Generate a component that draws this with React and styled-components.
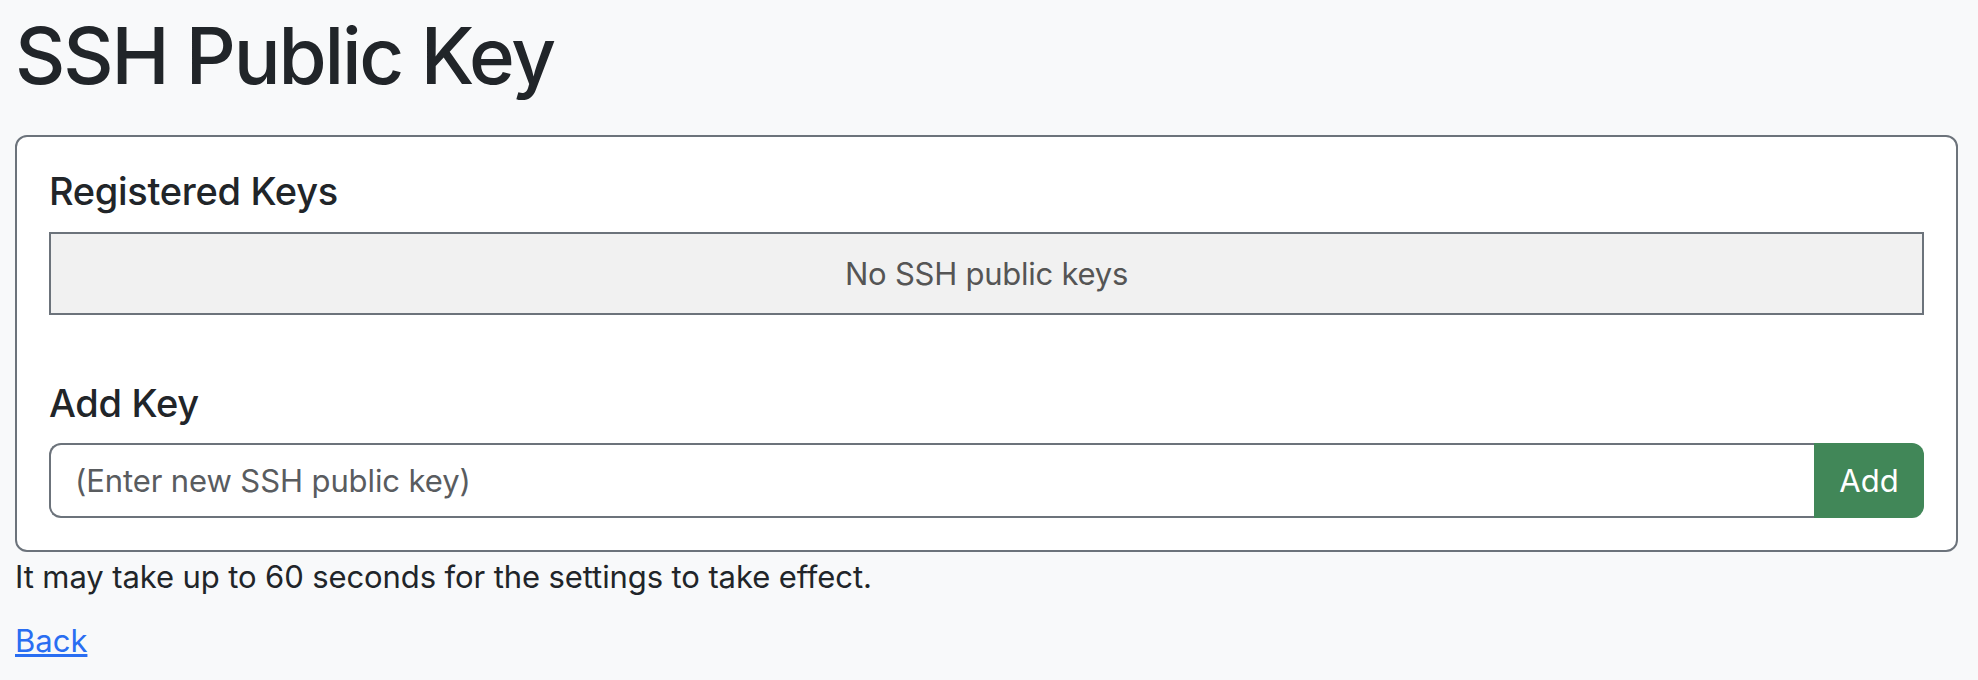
import styled, { createGlobalStyle } from 'styled-components';

const GlobalStyle = createGlobalStyle`
  html, body {
    margin: 0;
    padding: 0;
    background: #f8f9fa;
  }
  body {
    font-family: Inter, "Noto Sans", "Liberation Sans", sans-serif;
    color: #212529;
  }
  * {
    box-sizing: border-box;
  }
`;

const Page = styled.div`
  padding: 8px 20px 0 15px;
`;

const Title = styled.h1`
  margin: 0 0 31px;
  font-size: 78px;
  line-height: 96px;
  font-weight: 500;
  letter-spacing: -2.2px;
`;

const Card = styled.div`
  background: #fff;
  border: 2px solid #6c737b;
  border-radius: 12px;
  padding: 30px 32px 32px;
`;

const Section = styled.section`
  & + & {
    margin-top: 64px;
  }
`;

const SectionTitle = styled.h5`
  margin: 0 0 ${(p) => p.$gap || 16}px;
  font-size: 38px;
  line-height: 48px;
  font-weight: 500;
  letter-spacing: -0.3px;
`;

const EmptyBox = styled.div`
  background: #f1f1f1;
  border: 2px solid #6c737b;
  padding: 16px 16px 15px;
  text-align: center;
  font-size: 31px;
  line-height: 48px;
  letter-spacing: -0.25px;
  color: #555;
`;

const InputGroup = styled.form`
  display: flex;
  height: 75px;
`;

const KeyInput = styled.input`
  flex: 1;
  min-width: 0;
  border: 2px solid #6c737b;
  border-right: none;
  border-radius: 12px 0 0 12px;
  padding: 0 24px;
  font-family: inherit;
  font-size: 31px;
  letter-spacing: -0.1px;
  color: #212529;
  background: #fff;
  outline: none;

  &::placeholder {
    color: #595c5f;
  }
`;

const AddButton = styled.button`
  width: 110px;
  border: none;
  border-radius: 0 12px 12px 0;
  background: #418758;
  color: #fff;
  font-family: inherit;
  font-size: 31px;
  cursor: pointer;
`;

const Note = styled.p`
  margin: 1px 0 16px;
  font-size: 31px;
  line-height: 48px;
  letter-spacing: -0.1px;
`;

const BackLink = styled.a`
  font-size: 31px;
  line-height: 48px;
  color: #2a6ef2;
  text-decoration: underline;
`;

export default function App() {
  return (
    <>
      <GlobalStyle />
      <Page>
        <Title>SSH Public Key</Title>
        <Card>
          <Section>
            <SectionTitle $gap={17}>Registered Keys</SectionTitle>
            <EmptyBox>No SSH public keys</EmptyBox>
          </Section>
          <Section>
            <SectionTitle>Add Key</SectionTitle>
            <InputGroup onSubmit={(e) => e.preventDefault()}>
              <KeyInput placeholder="(Enter new SSH public key)" />
              <AddButton type="submit">Add</AddButton>
            </InputGroup>
          </Section>
        </Card>
        <Note>It may take up to 60 seconds for the settings to take effect.</Note>
        <BackLink href="#">Back</BackLink>
      </Page>
    </>
  );
}
